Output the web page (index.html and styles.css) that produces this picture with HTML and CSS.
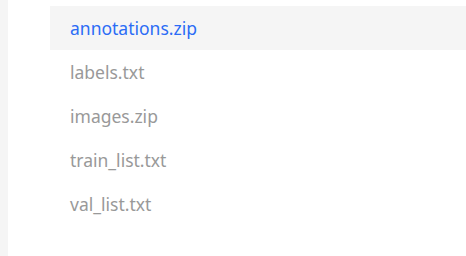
FILE: index.html
```html
<!DOCTYPE html>
<html lang="en">
<head>
    <meta charset="UTF-8">
    <title>files</title>
    <link rel="stylesheet" href="styles.css">
</head>
<body>
    <div class="side"></div>
    <ul class="file-list">
        <li class="file active">annotations.zip</li>
        <li class="file">labels.txt</li>
        <li class="file">images.zip</li>
        <li class="file">train_list.txt</li>
        <li class="file">val_list.txt</li>
    </ul>
</body>
</html>
```

FILE: styles.css
```css
body {
    margin: 0;
    display: flex;
    height: 256px;
    background: #fff;
    font-family: "Noto Sans", sans-serif;
    font-size: 17.5px;
}

.side {
    width: 8px;
    background: #f5f5f5;
}

.file-list {
    list-style: none;
    margin: 6px 0 0 42px;
    padding: 0;
    flex: 1;
}

.file {
    height: 44px;
    line-height: 44px;
    padding-left: 20px;
    color: #999;
}

.active {
    background: #f5f5f5;
    color: #2b6cf5;
}
```
